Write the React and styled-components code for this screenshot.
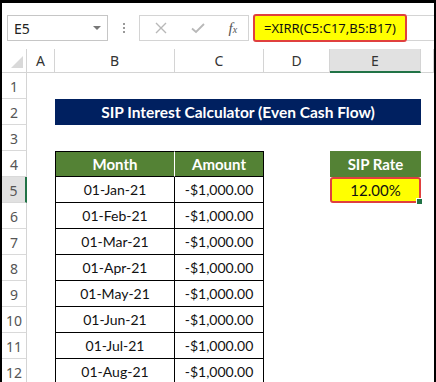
import React from "react"
import styled, { createGlobalStyle } from "styled-components"

const GlobalStyle = createGlobalStyle`
  html, body {
    margin: 0;
    padding: 0;
    background: #000;
    overflow: hidden;
  }
`

const COLS = "25px 28px 120px 89px 66px 91px 1fr"
const UI_FONT = `"Noto Sans", "Open Sans", sans-serif`
const CELL_FONT = `Lato, "Open Sans", sans-serif`

const months = ["Jan", "Feb", "Mar", "Apr", "May", "Jun", "Jul", "Aug"]

export default function App() {
  return (
    <>
      <GlobalStyle />
      <Frame>
        <Window>
          <FormulaBar>
            <NameBox>
              <span>E5</span>
              <Caret />
            </NameBox>
            <Dots>
              <i />
              <i />
              <i />
            </Dots>
            <FxBox>
              <svg width="12" height="12" viewBox="0 0 12 12">
                <path d="M1 1 L11 11 M11 1 L1 11" stroke="#b8b8b8" strokeWidth="1.4" />
              </svg>
              <svg width="14" height="12" viewBox="0 0 14 12">
                <path d="M1 6.5 L5 10 L13 2" stroke="#b8b8b8" strokeWidth="1.8" fill="none" />
              </svg>
              <Fx>
                f<sub>x</sub>
              </Fx>
            </FxBox>
            <Formula>=XIRR(C5:C17,B5:B17)</Formula>
            <FormulaRest />
          </FormulaBar>

          <HeaderRow>
            <Corner>
              <svg width="12" height="12" viewBox="0 0 12 12">
                <path d="M12 0 L12 12 L0 12 Z" fill="#d9d9d9" />
              </svg>
            </Corner>
            {["A", "B", "C", "D", "E", ""].map((c, i) => (
              <ColHead key={i} active={c === "E"}>
                {c}
              </ColHead>
            ))}
          </HeaderRow>

          <Row>
            <RowHead>1</RowHead>
          </Row>
          <Row>
            <RowHead>2</RowHead>
            <Cell />
            <Banner>SIP Interest Calculator (Even Cash Flow)</Banner>
          </Row>
          <Row>
            <RowHead>3</RowHead>
          </Row>
          <Row>
            <RowHead>4</RowHead>
            <Cell />
            <HeadCell first>Month</HeadCell>
            <HeadCell>Amount</HeadCell>
            <Cell />
            <RateHead>SIP Rate</RateHead>
          </Row>
          {months.map((m, i) => (
            <Row key={m}>
              <RowHead active={i === 0}>{i + 5}</RowHead>
              <Cell />
              <DataCell first>01-{m}-21</DataCell>
              <DataCell>-$1,000.00</DataCell>
              <Cell />
              {i === 0 ? (
                <RateCell>
                  12.00%
                  <Handle />
                </RateCell>
              ) : (
                <Cell />
              )}
            </Row>
          ))}
        </Window>
      </Frame>
    </>
  )
}

const Frame = styled.div`
  width: 436px;
  height: 382px;
  background: #000;
  padding: 3px 2px 0 2px;
  box-sizing: border-box;
`

const Window = styled.div`
  width: 432px;
  height: 379px;
  background: #fff;
  overflow: hidden;
`

const FormulaBar = styled.div`
  display: flex;
  align-items: center;
  height: 43px;
  padding: 12px 0 5px 5px;
  box-sizing: border-box;
  font-family: ${UI_FONT};
`

const NameBox = styled.div`
  display: flex;
  align-items: center;
  justify-content: space-between;
  width: 101px;
  height: 26px;
  box-sizing: border-box;
  border: 1px solid #c6c6c6;
  padding: 0 6px 0 6px;
  font-size: 14px;
  color: #222;
`

const Caret = styled.div`
  width: 0;
  height: 0;
  border-left: 4px solid transparent;
  border-right: 4px solid transparent;
  border-top: 4px solid #777;
`

const Dots = styled.div`
  display: flex;
  flex-direction: column;
  gap: 2px;
  width: 31px;
  align-items: center;

  i {
    width: 2px;
    height: 2px;
    background: #9a9a9a;
  }
`

const FxBox = styled.div`
  display: flex;
  align-items: center;
  justify-content: space-around;
  width: 110px;
  height: 26px;
  box-sizing: border-box;
  border: 1px solid #d4d4d4;
  padding: 0 4px 0 8px;
  gap: 10px;
`

const Fx = styled.span`
  font-family: "Liberation Serif", serif;
  font-style: italic;
  font-size: 15px;
  color: #555;

  sub {
    font-size: 10px;
    vertical-align: 0;
  }
`

const Formula = styled.div`
  display: flex;
  align-items: center;
  margin-left: 4px;
  width: 154px;
  height: 28px;
  box-sizing: border-box;
  border: 2px solid #e0403e;
  border-radius: 3px;
  background: #ffff00;
  padding-left: 9px;
  font-size: 13px;
  color: #111;
  white-space: nowrap;
`

const FormulaRest = styled.div`
  flex: 1;
  height: 26px;
  border-top: 1px solid #d4d4d4;
  border-bottom: 1px solid #d4d4d4;
  box-sizing: border-box;
`

const Row = styled.div`
  display: grid;
  grid-template-columns: ${COLS};
  height: 26px;
`

const HeaderRow = styled(Row)`
  height: 24px;
  margin-top: 3px;
  font-family: ${UI_FONT};
`

const Corner = styled.div`
  display: flex;
  align-items: flex-end;
  justify-content: flex-end;
  padding: 0 3px 4px 0;
  border-right: 1px solid #d4d4d4;
  border-bottom: 1px solid #d4d4d4;
`

const ColHead = styled.div`
  display: flex;
  align-items: center;
  justify-content: center;
  font-size: 14px;
  color: #333;
  border-right: 1px solid #d4d4d4;
  border-bottom: ${({ active }) => (active ? "2px solid #217346" : "1px solid #d4d4d4")};
  background: ${({ active }) => (active ? "#e1e1e1" : "#fff")};
`

const RowHead = styled.div`
  display: flex;
  align-items: center;
  justify-content: center;
  padding-top: 2px;
  box-sizing: border-box;
  font-family: ${UI_FONT};
  font-size: 14px;
  color: #555;
  border-bottom: 1px solid #d9d9d9;
  border-right: ${({ active }) => (active ? "2px solid #217346" : "1px solid #d4d4d4")};
  background: ${({ active }) => (active ? "#e1e1e1" : "#fff")};
`

const Cell = styled.div``

const Banner = styled.div`
  grid-column: 3 / 7;
  display: flex;
  align-items: center;
  justify-content: center;
  background: #002060;
  color: #fff;
  font-family: ${CELL_FONT};
  font-weight: 700;
  font-size: 15.5px;
`

const HeadCell = styled.div`
  display: flex;
  align-items: center;
  justify-content: center;
  background: #548235;
  color: #fff;
  font-family: ${CELL_FONT};
  font-weight: 700;
  font-size: 15px;
  border-top: 1px solid #000;
  border-bottom: 1px solid #000;
  border-left: ${({ first }) => (first ? "1px solid #000" : "none")};
  border-right: ${({ first }) => (first ? "1px solid #fff" : "1px solid #000")};
`

const DataCell = styled.div`
  display: flex;
  align-items: center;
  justify-content: center;
  font-family: ${CELL_FONT};
  font-size: 14px;
  color: #111;
  border-bottom: 1px solid #000;
  border-right: 1px solid #000;
  border-left: ${({ first }) => (first ? "1px solid #000" : "none")};
`

const RateHead = styled.div`
  display: flex;
  align-items: center;
  justify-content: center;
  background: #548235;
  color: #fff;
  font-family: ${CELL_FONT};
  font-weight: 700;
  font-size: 15px;
`

const RateCell = styled.div`
  position: relative;
  display: flex;
  align-items: center;
  justify-content: center;
  background: #ffff00;
  border: 2px solid #e0403e;
  border-radius: 3px;
  font-family: ${CELL_FONT};
  font-size: 15px;
  color: #111;
`

const Handle = styled.div`
  position: absolute;
  right: -4px;
  bottom: -4px;
  width: 5px;
  height: 5px;
  background: #217346;
  border: 1px solid #fff;
`
